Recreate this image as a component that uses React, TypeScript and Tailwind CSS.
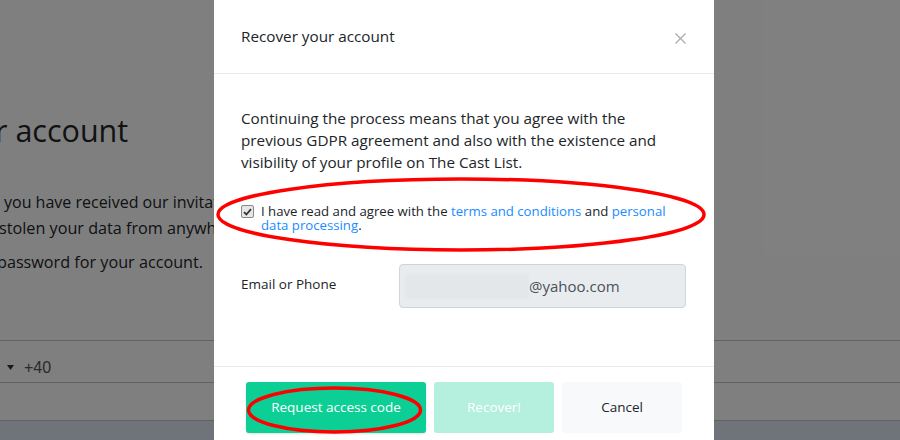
import React from "react";

const font = { fontFamily: "'Open Sans', Lato, sans-serif" };

function Line({ prefix, text, className, gap }: { prefix: string; text: string; className?: string; gap?: string }) {
  return (
    <div className={"flex whitespace-nowrap " + (className || "")}>
      <div className="w-0 flex justify-end">
        <span className={gap || "pr-[0.28em]"}>{prefix}</span>
      </div>
      <span>{text}</span>
    </div>
  );
}

export default function App() {
  return (
    <div className="relative w-[900px] h-[440px] overflow-hidden bg-white text-[#212529]" style={font}>
      {/* background page */}
      <div className="flex flex-col w-[900px]">
        <div className="h-[110px]" />
        <Line prefix="Recove" text="r account" className="text-[30.5px] leading-[40px] -ml-[5px]" gap="pr-0" />
        <div className="h-[39px]" />
        <Line prefix="If" text="you have received our invitation email and nobody" className="text-[16px] leading-[26px] pl-[4px]" gap="pr-[8px]" />
        <Line prefix="has not" text="stolen your data from anywhere else." className="text-[16.2px] leading-[26px] -ml-[1px]" />
        <div className="h-[8px]" />
        <Line prefix="Then set a new" text="password for your account." className="text-[16.2px] leading-[26px] -ml-[3px]" />
        <div className="h-[65px]" />
        <div className="border-t border-[#c4c4c4] h-[42px] flex items-center gap-[9px] pl-[7px] pt-[12px]">
          <svg width="7" height="5" viewBox="0 0 7 5"><path d="M0 0h7L3.5 5z" fill="#333" /></svg>
          <span className="text-[16px] text-[#555] ml-[1px]" style={{ fontFamily: "'Liberation Sans', Arial, sans-serif" }}>+40</span>
        </div>
        <div className="border-t border-[#c4c4c4] h-[38px]" />
        <div className="border-t border-[#c4c4c4] h-[40px] bg-[#dfe6f4]" />
      </div>

      {/* overlay */}
      <div className="absolute inset-0 bg-black/50" />

      {/* modal */}
      <div className="absolute left-[214px] top-[-3px] w-[500px] h-[460px] bg-white rounded-[4px] flex flex-col">
        <div className="h-[77px] pt-[3px] px-[27px] flex items-center justify-between border-b border-[#e9ecef]">
          <span className="text-[15.25px] text-[#212529]">Recover your account</span>
          <svg width="11" height="11" viewBox="0 0 11 11" className="mr-[1px] mt-[4px]">
            <path d="M0.5 0.5L10.5 10.5M10.5 0.5L0.5 10.5" stroke="#aaa" strokeWidth="1.2" />
          </svg>
        </div>
        <div className="px-[27px] pt-[33px] h-[292px] flex flex-col">
          <p className="text-[15.25px] leading-[22px] text-[#212529]">
            Continuing the process means that you agree with the previous GDPR agreement and also with the existence and visibility of your profile on The Cast List.
          </p>
          <div className="mt-[31px] flex items-start gap-[7px]">
            <div className="mt-[1px] w-[13px] h-[13px] shrink-0 rounded-[2px] border border-[#888] bg-[#e6e6e6] flex items-center justify-center">
              <svg width="9" height="8" viewBox="0 0 9 8"><path d="M1 4.2L3.4 6.5L8 1.2" stroke="#333" strokeWidth="1.8" fill="none" /></svg>
            </div>
            <p className="text-[13.2px] leading-[14px] text-[#212529]">
              I have read and agree with the <span className="text-[#1a8cff]">terms and conditions</span> and <span className="text-[#1a8cff]">personal data processing</span>.
            </p>
          </div>
          <div className="mt-[32px] flex items-center">
            <span className="w-[158px] text-[13.5px] text-[#212529] -mt-[3px]">Email or Phone</span>
            <div className="w-[287px] h-[44px] rounded-[4px] border border-[#ced4da] bg-[#e9ecef] flex items-center pl-[5px]">
              <div className="w-[124px] h-[25px] bg-[#e4e7ea] blur-[1px]" />
              <span className="text-[15px] text-[#495057]">@yahoo.com</span>
            </div>
          </div>
        </div>
        <div className="border-t border-[#e9ecef] pt-[15px] pl-[32px] flex gap-[8px]">
          <button className="w-[180px] h-[51px] rounded-[3px] bg-[#0ccf96] text-white text-[13.5px] shadow-sm">Request access code</button>
          <button className="w-[120px] h-[51px] rounded-[3px] bg-[#b4f0dd] text-white text-[13.5px]">Recover!</button>
          <button className="w-[120px] h-[51px] rounded-[3px] bg-[#f8f9fa] text-[#212529] text-[13.5px]">Cancel</button>
        </div>
      </div>

      {/* annotations */}
      <svg className="absolute inset-0 pointer-events-none" width="900" height="440">
        <ellipse cx="461" cy="214.5" rx="243" ry="35.5" fill="none" stroke="#ff0000" strokeWidth="3.5" />
        <ellipse cx="334.5" cy="410" rx="86" ry="22" fill="none" stroke="#ff0000" strokeWidth="3.5" />
      </svg>
    </div>
  );
}
